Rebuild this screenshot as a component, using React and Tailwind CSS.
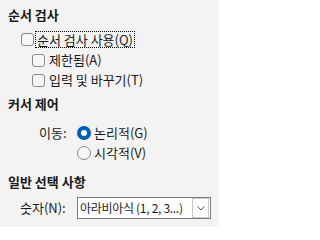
import React from 'react';

const font = { fontFamily: '"Noto Sans CJK KR", "Noto Sans", sans-serif' };

const CheckBox = () => (
  <span className="inline-block w-[13px] h-[13px] shrink-0 rounded-[3px] border border-[#8a8a8a] bg-[#f7f7f7]" />
);

const Radio = ({ checked }) =>
  checked ? (
    <span className="flex w-[14px] h-[14px] shrink-0 items-center justify-center rounded-full bg-[#005fb8]">
      <span className="w-[6px] h-[6px] rounded-full bg-white" />
    </span>
  ) : (
    <span className="inline-block w-[14px] h-[14px] shrink-0 rounded-full border border-[#8a8a8a] bg-[#f7f7f7]" />
  );

const Heading = ({ children, className = '' }) => (
  <div className={`h-[16px] leading-[16px] text-[13px] font-bold text-[#1a1a1a] ${className}`}>{children}</div>
);

export default function App() {
  return (
    <div style={font} className="w-[219px] h-[227px] overflow-hidden bg-[#f3f3f3] pl-2 pt-[7px] text-[13px] text-[#1a1a1a]">
      <Heading>순서 검사</Heading>

      <div className="mt-[6px] flex h-[20px] items-center pl-[13px]">
        <CheckBox />
        <span className="ml-[1px] border border-dotted border-black px-px leading-[15px] whitespace-nowrap">순서 검사 사용(Q)</span>
      </div>
      <div className="mt-px flex h-[20px] items-center pl-[24px]">
        <CheckBox />
        <span className="ml-[4px] whitespace-nowrap">제한됨(A)</span>
      </div>
      <div className="flex h-[20px] items-center pl-[24px]">
        <CheckBox />
        <span className="ml-[4px] whitespace-nowrap">입력 및 바꾸기(T)</span>
      </div>

      <Heading className="mt-[6px]">커서 제어</Heading>

      <div className="mt-[11px] flex h-[20px] items-center pl-[31px]">
        <span className="w-[38px] whitespace-nowrap">이동:</span>
        <Radio checked />
        <span className="ml-[3px] whitespace-nowrap">논리적(G)</span>
      </div>
      <div className="flex h-[20px] items-center pl-[69px]">
        <Radio />
        <span className="ml-[3px] whitespace-nowrap">시각적(V)</span>
      </div>

      <Heading className="mt-[11px]">일반 선택 사항</Heading>

      <div className="mt-[7px] flex h-[22px] items-center pl-[12px]">
        <span className="w-[57px] whitespace-nowrap">숫자(N):</span>
        <div className="flex h-[22px] w-[134px] items-center border border-[#7a7a7a] bg-white">
          <span className="min-w-0 flex-1 pl-[2px] text-[12px] tracking-[-0.3px] whitespace-nowrap">아라비아식 (1, 2, 3...)</span>
          <span className="mr-px flex h-[20px] w-[17px] shrink-0 items-center justify-center border border-[#c8c8c8] bg-white">
            <svg width="8" height="5" viewBox="0 0 8 5" fill="none">
              <path d="M0.5 0.5 L4 4 L7.5 0.5" stroke="#5a5a5a" strokeWidth="1" />
            </svg>
          </span>
        </div>
      </div>
    </div>
  );
}
